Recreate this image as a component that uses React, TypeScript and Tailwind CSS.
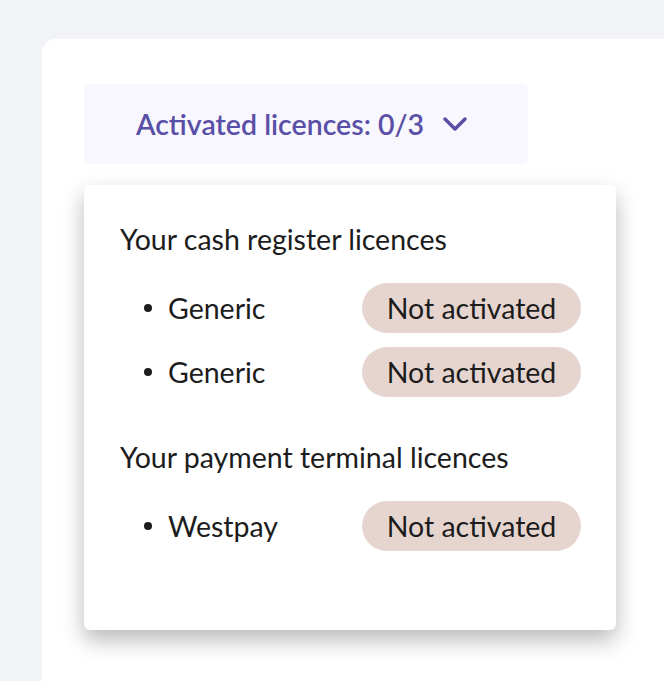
const sections = [
  { title: 'Your cash register licences', items: ['Generic', 'Generic'] },
  { title: 'Your payment terminal licences', items: ['Westpay'] },
];

function LicenceRow({ name }: { name: string }) {
  return (
    <li className="flex items-center justify-between">
      <div className="flex items-center pl-[24px]">
        <span className="h-[8px] w-[8px] rounded-full bg-[#1c1c1c]" />
        <span className="ml-[16px]">{name}</span>
      </div>
      <span className="flex h-[50px] w-[219px] items-center justify-center rounded-full bg-[#e6d5cf]">
        Not activated
      </span>
    </li>
  );
}

export default function App() {
  return (
    <div
      className="flex h-screen flex-col bg-[#f2f3f7] pl-[42px] pt-[39px] text-[#1c1c1c]"
      style={{ fontFamily: 'Lato, "Noto Sans", sans-serif' }}
    >
      <div className="flex-1 rounded-tl-[14px] bg-white pl-[42px] pt-[45px]">
        <button
          type="button"
          className="flex h-[80px] w-[444px] items-center rounded-[5px] bg-[#f8f7fd] pl-[52px] text-[28.5px] font-semibold text-[#5a4fa6]"
        >
          Activated licences: 0/3
          <svg className="ml-[19px] h-[14px] w-[24px]" viewBox="0 0 24 14" fill="none">
            <polyline
              points="2,2 12,12 22,2"
              stroke="currentColor"
              strokeWidth="3.4"
              strokeLinecap="round"
              strokeLinejoin="round"
            />
          </svg>
        </button>

        <div className="mt-[21px] h-[445px] w-[532px] rounded-[6px] bg-white pl-[36px] pr-[35px] pt-[37px] shadow-[0_10px_22px_rgba(0,0,0,0.28)]">
          {sections.map((section, i) => (
            <div key={section.title} className={i > 0 ? 'mt-[43px]' : ''}>
              <h3 className="text-[28.5px] leading-[34px]">{section.title}</h3>
              <ul className="mt-[27px] flex flex-col gap-[14px] text-[28.5px]">
                {section.items.map((item, j) => (
                  <LicenceRow key={j} name={item} />
                ))}
              </ul>
            </div>
          ))}
        </div>
      </div>
    </div>
  );
}
